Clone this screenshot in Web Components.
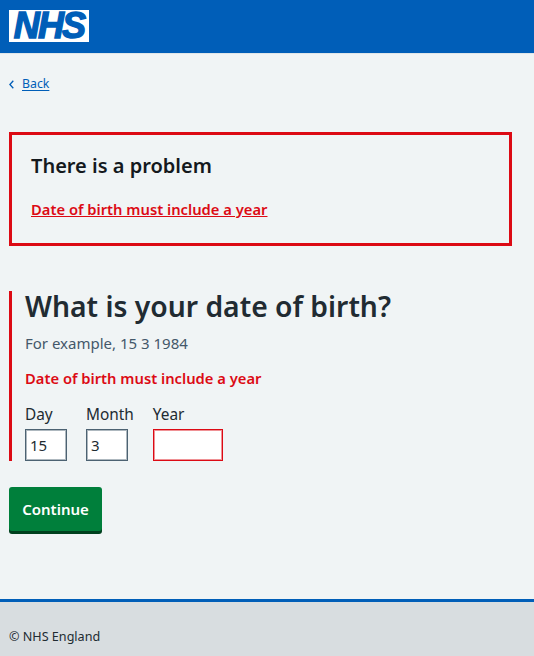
<!DOCTYPE html>
<html lang="en">
<head>
<meta charset="utf-8">
<title>What is your date of birth?</title>
<style>
  html, body { margin: 0; height: 100%; }
  body {
    background: #f0f4f5;
    color: #212b32;
    font-family: "Noto Sans", "Open Sans", sans-serif;
    display: flex;
    flex-direction: column;
    height: 656px;
    overflow: hidden;
  }
  nhs-main { flex: 1; }
</style>
</head>
<body>
<nhs-header></nhs-header>
<nhs-main>
  <nhs-back-link>Back</nhs-back-link>
  <nhs-error-summary title="There is a problem">Date of birth must include a year</nhs-error-summary>
  <nhs-date-input></nhs-date-input>
  <nhs-button>Continue</nhs-button>
</nhs-main>
<nhs-footer>© NHS England</nhs-footer>

<script>
class NhsHeader extends HTMLElement {
  constructor() {
    super();
    this.attachShadow({ mode: 'open' }).innerHTML = `
      <style>
        :host { display: block; background: #005eb8; border-bottom: 1px solid #dfe5e8; padding: 10px 9px 0; box-sizing: border-box; height: 54px; }
        .logo {
          width: 80px; height: 32px; background: #fff; display: flex; align-items: center; justify-content: center;
          color: #005eb8; font: italic 700 36px/32px "Liberation Sans", sans-serif; letter-spacing: -1.9px;
          -webkit-text-stroke: 1.4px #005eb8; box-sizing: border-box;
        }
      </style>
      <div class="logo">NHS</div>`;
  }
}
class NhsBackLink extends HTMLElement {
  constructor() {
    super();
    this.attachShadow({ mode: 'open' }).innerHTML = `
      <style>
        :host { display: flex; align-items: center; gap: 8px; padding: 20px 9px 0; height: 20px; font-size: 12.3px; line-height: 20px; color: #005eb8; }
        svg { width: 5px; height: 9px; flex: none; }
        a { color: #005eb8; text-decoration: underline; text-underline-offset: 2px; }
      </style>
      <svg viewBox="0 0 5 9"><path d="M4.3 .8 .9 4.5l3.4 3.7" fill="none" stroke="#005eb8" stroke-width="1.3"/></svg>
      <a href="#"><slot></slot></a>`;
  }
}
class NhsErrorSummary extends HTMLElement {
  constructor() {
    super();
    this.attachShadow({ mode: 'open' }).innerHTML = `
      <style>
        :host { display: block; margin: 38px 22px 0 9px; border: 3px solid #dc0a14; padding: 16px 19px 0; height: 114px; box-sizing: border-box; }
        h2 { margin: 0; font-size: 20px; line-height: 30px; font-weight: 600; color: #14191d; }
        a { display: block; margin-top: 17px; font-size: 14.75px; line-height: 22px; font-weight: 600; color: #dc0a14; }
      </style>
      <h2></h2>
      <a href="#"><slot></slot></a>`;
    this.shadowRoot.querySelector('h2').textContent = this.getAttribute('title');
  }
}
class NhsDateField extends HTMLElement {
  constructor() {
    super();
    this.attachShadow({ mode: 'open' }).innerHTML = `
      <style>
        :host { display: block; }
        label { display: block; font-size: 15.4px; line-height: 24px; margin-bottom: 2px; color: #212b32; white-space: nowrap; }
        .box {
          width: var(--w, 42px); height: 32px; box-sizing: border-box; background: #fff;
          border: 1px solid var(--c, #4c6272); box-shadow: inset 0 0 0 1px var(--s, rgba(76, 98, 114, .45)); padding-left: 4px;
          font-size: 15px; line-height: 30px; color: #212b32;
        }
      </style>
      <label></label>
      <div class="box"></div>`;
    this.shadowRoot.querySelector('label').textContent = this.getAttribute('label');
    this.shadowRoot.querySelector('.box').textContent = this.getAttribute('value') || '';
  }
}
class NhsDateInput extends HTMLElement {
  constructor() {
    super();
    this.attachShadow({ mode: 'open' }).innerHTML = `
      <style>
        :host { display: block; margin: 45px 0 0 9px; border-left: 3px solid #dc0a14; padding-left: 13px; height: 170px; box-sizing: border-box; }
        h1 { margin: 0; font-size: 28.3px; line-height: 30px; font-weight: 600; color: #212b32; }
        .hint { margin-top: 10px; font-size: 15px; line-height: 24px; color: #44586a; }
        .error { margin-top: 11px; font-size: 14.75px; line-height: 24px; font-weight: 600; color: #dc0a14; }
        .row { display: flex; gap: 19px; margin-top: 13px; }
        .year { --w: 70px; --c: #dc0a14; --s: rgba(220, 10, 20, .45); }
      </style>
      <h1>What is your date of birth?</h1>
      <div class="hint">For example, 15 3 1984</div>
      <div class="error">Date of birth must include a year</div>
      <div class="row">
        <nhs-date-field label="Day" value="15"></nhs-date-field>
        <nhs-date-field label="Month" value="3"></nhs-date-field>
        <nhs-date-field class="year" label="Year"></nhs-date-field>
      </div>`;
  }
}
class NhsButton extends HTMLElement {
  constructor() {
    super();
    this.attachShadow({ mode: 'open' }).innerHTML = `
      <style>
        :host { display: block; margin: 26px 0 0 9px; width: max-content; }
        button {
          display: block; width: 93px; height: 44px; border: 0; border-radius: 3px; padding: 0 0 1px;
          background: #007f3b; color: #fff; box-shadow: 0 3px 0 #00401e;
          font: 600 15px/22px "Noto Sans", "Open Sans", sans-serif;
        }
      </style>
      <button><slot></slot></button>`;
  }
}
class NhsFooter extends HTMLElement {
  constructor() {
    super();
    this.attachShadow({ mode: 'open' }).innerHTML = `
      <style>
        :host { display: block; background: #d8dde0; border-top: 3px solid #005eb8; height: 57px; box-sizing: border-box; padding: 26px 9px 0; font-size: 12.6px; line-height: 18px; color: #212b32; }
      </style>
      <slot></slot>`;
  }
}
class NhsMain extends HTMLElement {
  constructor() {
    super();
    this.attachShadow({ mode: 'open' }).innerHTML = `
      <style>:host { display: block; }</style><slot></slot>`;
  }
}
customElements.define('nhs-header', NhsHeader);
customElements.define('nhs-back-link', NhsBackLink);
customElements.define('nhs-error-summary', NhsErrorSummary);
customElements.define('nhs-date-field', NhsDateField);
customElements.define('nhs-date-input', NhsDateInput);
customElements.define('nhs-button', NhsButton);
customElements.define('nhs-footer', NhsFooter);
customElements.define('nhs-main', NhsMain);
</script>
</body>
</html>
